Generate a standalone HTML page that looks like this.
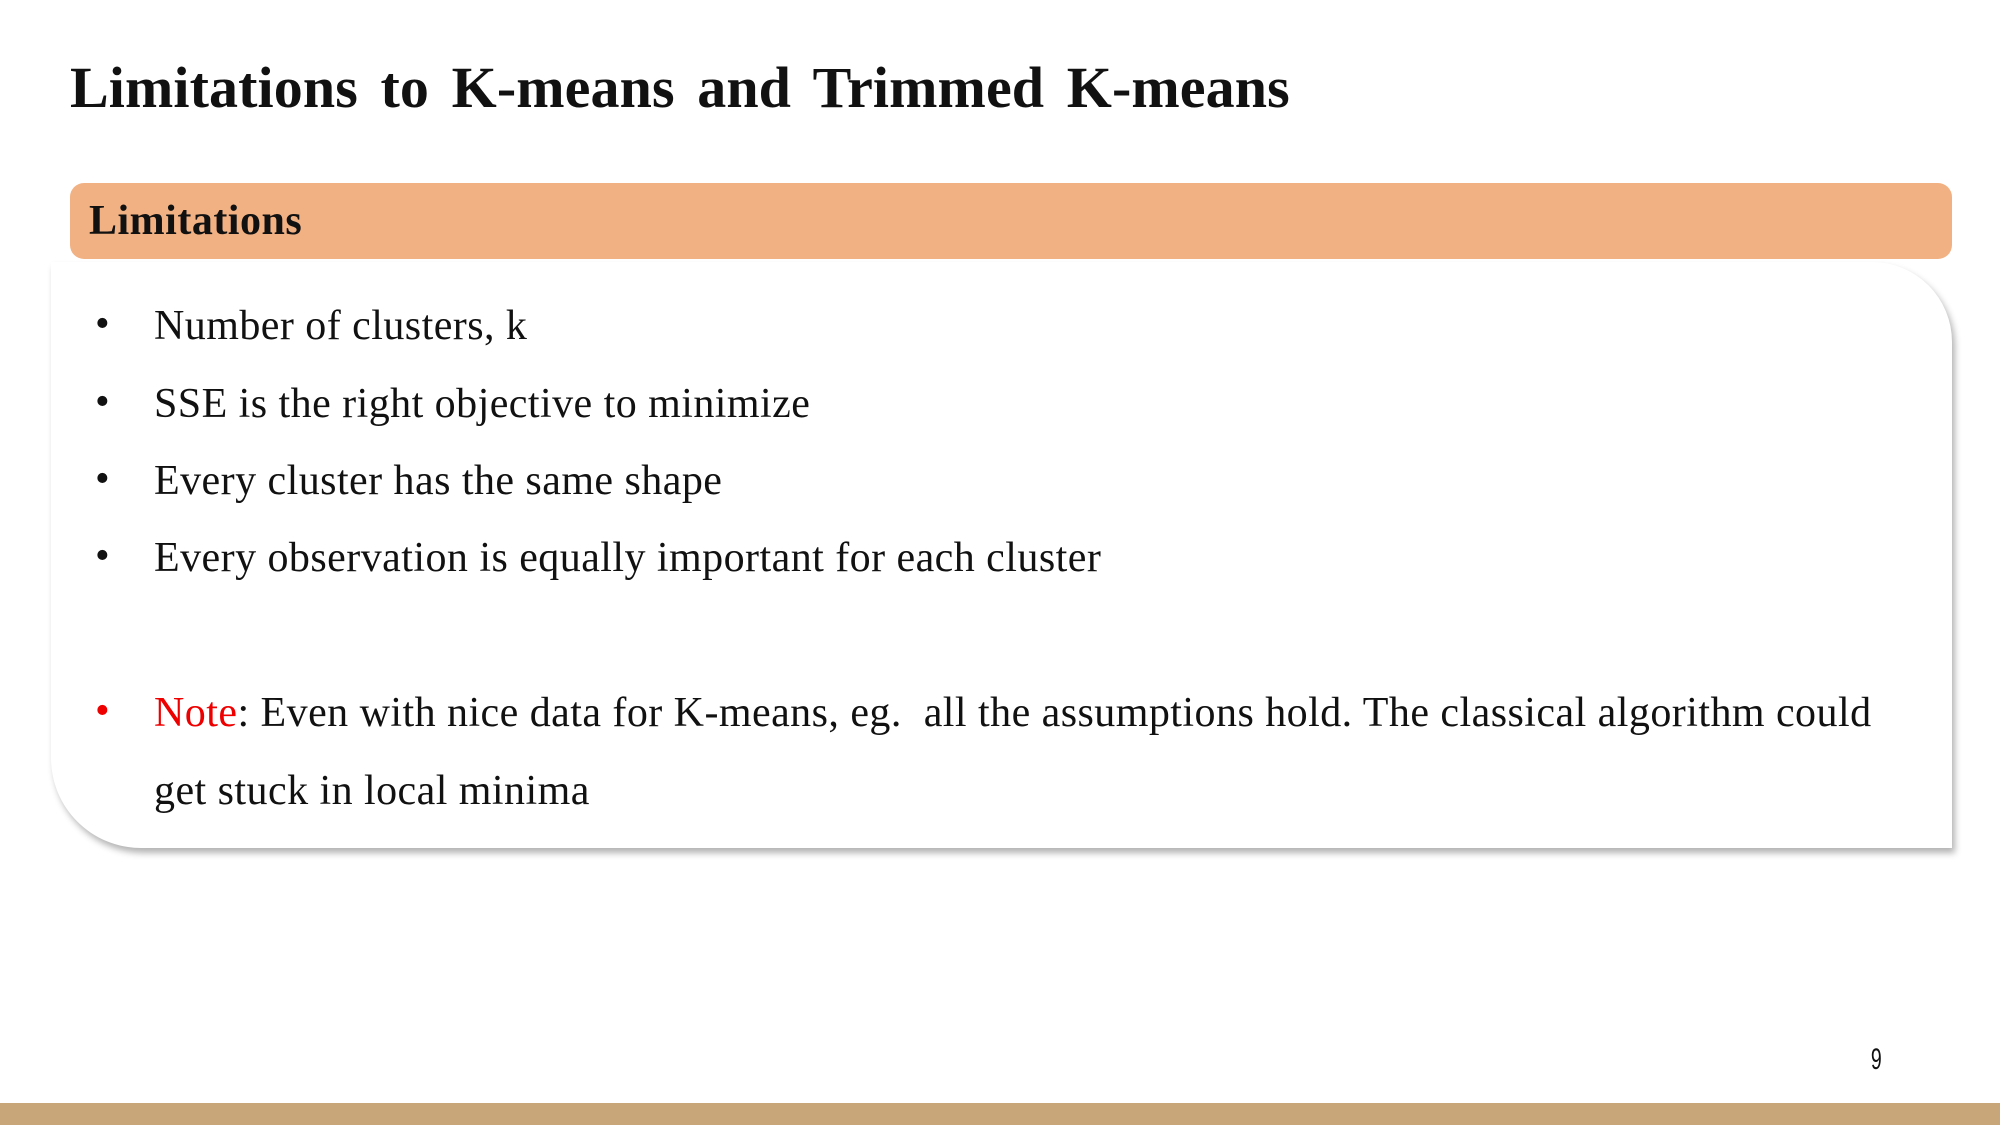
<!DOCTYPE html>
<html><head><meta charset="utf-8"><style>
html,body{margin:0;padding:0;}
body{width:2000px;height:1125px;position:relative;background:#fff;overflow:hidden;font-family:"Liberation Serif",serif;color:#111;}
.title{position:absolute;left:70px;top:54px;font-size:58px;font-weight:bold;white-space:nowrap;word-spacing:8px;letter-spacing:0.1px;}
.bar{position:absolute;left:70px;top:183px;width:1882px;height:76px;background:#F2B183;border-radius:14px;}
.bar span{position:absolute;left:19px;top:14px;font-size:42px;font-weight:bold;letter-spacing:0.5px;}
.box{position:absolute;left:51px;top:262px;width:1901px;height:586px;background:#fff;border-radius:0 80px 0 90px;box-shadow:3px 5px 7px rgba(0,0,0,0.3);}
.li{position:absolute;left:154px;font-size:42px;white-space:nowrap;letter-spacing:0.45px;}
.b{position:absolute;left:95px;font-size:42px;}
.num{position:absolute;left:1868px;top:1043px;font-family:"Liberation Sans",sans-serif;font-size:30px;transform:scaleX(0.65);}
.foot{position:absolute;left:0;top:1103px;width:2000px;height:22px;background:#C9A679;}
</style></head><body>
<div class="title">Limitations to K-means and Trimmed K-means</div>
<div class="box"></div>
<div class="bar"><span>Limitations</span></div>
<div class="b" style="top:300px">•</div><div class="li" style="top:302px">Number of clusters, k</div>
<div class="b" style="top:378px">•</div><div class="li" style="top:380px">SSE is the right objective to minimize</div>
<div class="b" style="top:455px">•</div><div class="li" style="top:457px">Every cluster has the same shape</div>
<div class="b" style="top:532px">•</div><div class="li" style="top:534px">Every observation is equally important for each cluster</div>
<div class="b" style="top:687px;color:#e00">•</div><div class="li" style="top:689px"><span style="color:#e00">Note</span>: Even with nice data for K-means, eg.&nbsp; all the assumptions hold. The classical algorithm could</div>
<div class="li" style="top:767px">get stuck in local minima</div>
<div class="num">9</div>
<div class="foot"></div>
</body></html>
